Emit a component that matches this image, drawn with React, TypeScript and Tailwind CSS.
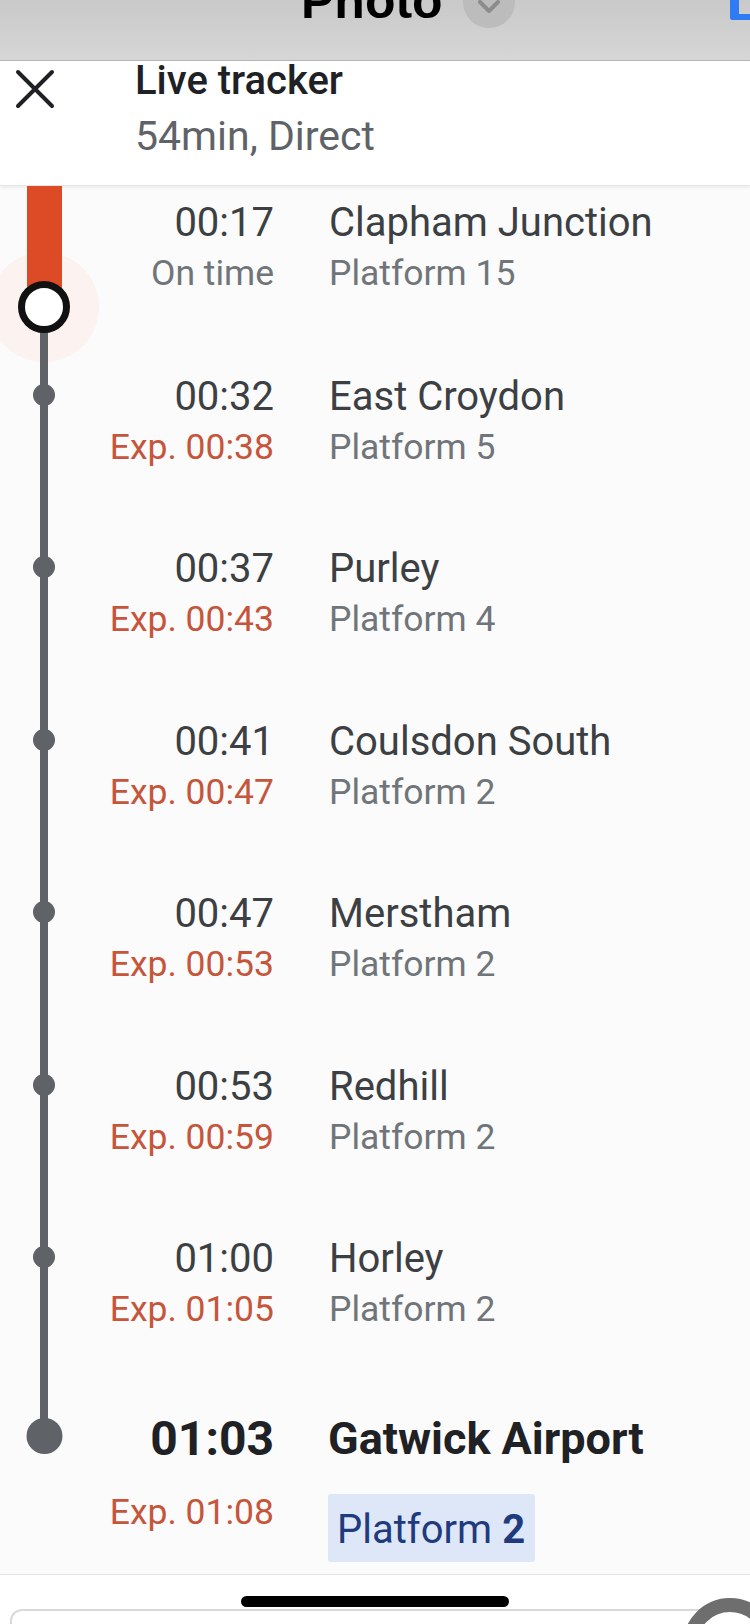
import React from 'react';

type Stop = {
  time: string;
  status: string;
  name: string;
  platform: string;
  late: boolean;
};

const stops: Stop[] = [
  { time: '00:32', status: 'Exp. 00:38', name: 'East Croydon', platform: 'Platform 5', late: true },
  { time: '00:37', status: 'Exp. 00:43', name: 'Purley', platform: 'Platform 4', late: true },
  { time: '00:41', status: 'Exp. 00:47', name: 'Coulsdon South', platform: 'Platform 2', late: true },
  { time: '00:47', status: 'Exp. 00:53', name: 'Merstham', platform: 'Platform 2', late: true },
  { time: '00:53', status: 'Exp. 00:59', name: 'Redhill', platform: 'Platform 2', late: true },
  { time: '01:00', status: 'Exp. 01:05', name: 'Horley', platform: 'Platform 2', late: true },
];

const LINE = '#5f6368';

const StatusBar = () => (
  <div className="h-[61px] border-b border-[#b3b3b3] bg-gradient-to-b from-[#c9c9c9] to-[#d6d6d6] flex items-start overflow-hidden">
    <div className="pl-[301px] -mt-[24px] text-[50px] leading-[50px] font-bold text-black font-['Liberation_Sans',Arial,sans-serif]">
      Photo
    </div>
    <div className="ml-[20px] -mt-[24px] w-[52px] h-[52px] rounded-full bg-[#bcbcbc] flex items-end justify-center pb-[14px]">
      <svg width="24" height="14" viewBox="0 0 24 14">
        <path d="M3 2 L12 11 L21 2" fill="none" stroke="#8c8c8c" strokeWidth="4" strokeLinecap="round" strokeLinejoin="round" />
      </svg>
    </div>
    <div className="ml-auto w-[20px] h-[20px] border-l-[9px] border-b-[6px] border-[#2f7bf5] rounded-bl-[3px]" />
  </div>
);

const Header = () => (
  <div className="h-[125px] bg-white flex border-b border-[#e6e6e6] shadow-[0_2px_3px_rgba(0,0,0,0.06)]">
    <div className="w-[135px] pl-[15px] pt-[8px]">
      <svg width="40" height="40" viewBox="0 0 40 40">
        <path d="M3 3 L37 37 M37 3 L3 37" stroke="#202124" strokeWidth="4" strokeLinecap="round" />
      </svg>
    </div>
    <div className="flex flex-col">
      <div className="text-[40px] leading-[40px] font-medium text-[#202124]">Live tracker</div>
      <div className="mt-[15px] text-[41px] leading-[40px] text-[#5f6368]">54min, Direct</div>
    </div>
  </div>
);

const FirstRow = () => (
  <div className="flex h-[185px]">
    <svg width="100" height="185" className="shrink-0">
      <circle cx="44" cy="121" r="55" fill="#fcf3f0" />
      <rect x="27" y="0" width="35" height="118" fill="#dc4a26" />
      <rect x="40" y="140" width="8" height="45" fill={LINE} />
      <circle cx="44" cy="121" r="22.5" fill="white" stroke="#111" strokeWidth="7" />
    </svg>
    <div className="w-[174px] pt-[12px] text-right">
      <div className="text-[40px] leading-[50px] text-[#3c4043]">00:17</div>
      <div className="text-[35.5px] leading-[50px] text-[#70757a]">On time</div>
    </div>
    <div className="ml-[55px] pt-[12px]">
      <div className="text-[40px] leading-[50px] text-[#3c4043]">Clapham Junction</div>
      <div className="text-[35.5px] leading-[50px] text-[#70757a]">Platform 15</div>
    </div>
  </div>
);

const StopRow = ({ stop }: { stop: Stop }) => (
  <div className="flex h-[172.4px]">
    <svg width="100" height="173" className="shrink-0">
      <rect x="40" y="0" width="8" height="173" fill={LINE} />
      <circle cx="44" cy="24" r="11" fill={LINE} />
    </svg>
    <div className="w-[174px] pt-[1px] text-right">
      <div className="text-[40px] leading-[50px] text-[#3c4043]">{stop.time}</div>
      <div className={`text-[35.5px] leading-[50px] ${stop.late ? 'text-[#c5553b]' : 'text-[#70757a]'}`}>
        {stop.status}
      </div>
    </div>
    <div className="ml-[55px] pt-[1px]">
      <div className="text-[40px] leading-[50px] text-[#3c4043]">{stop.name}</div>
      <div className="text-[35.5px] leading-[50px] text-[#70757a]">{stop.platform}</div>
    </div>
  </div>
);

const LastRow = () => (
  <div className="flex h-[169px]">
    <svg width="100" height="169" className="shrink-0">
      <rect x="40" y="0" width="8" height="30" fill={LINE} />
      <circle cx="44.5" cy="31" r="18" fill={LINE} />
    </svg>
    <div className="w-[174px] text-right pt-[6px]">
      <div className="text-[48px] leading-[56px] font-bold text-[#202124]">01:03</div>
      <div className="mt-[20px] text-[35.5px] leading-[50px] text-[#c5553b]">Exp. 01:08</div>
    </div>
    <div className="ml-[54px] pt-[6px]">
      <div className="text-[45px] leading-[56px] font-bold text-[#202124]">Gatwick Airport</div>
      <div className="mt-[27px] h-[68px] w-[207px] rounded-[3px] bg-[#dde7f8] pl-[9px] pt-[4px] flex items-center text-[40px] text-[#1f3a7d]">
        Platform <span className="ml-[10px] font-bold">2</span>
      </div>
    </div>
  </div>
);

const BottomBar = () => (
  <div className="relative flex-1 bg-white border-t border-[#e2e2e2] overflow-hidden">
    <div className="flex justify-center pt-[21px]">
      <div className="w-[268px] h-[11px] rounded-full bg-black" />
    </div>
    <div className="mt-[2px] ml-[10px] w-[720px] h-[40px] rounded-tl-[12px] border-t-2 border-l-2 border-[#d9d9d9]" />
    <svg width="70" height="60" className="absolute right-0 top-[20px]">
      <circle cx="50" cy="50" r="40" fill="white" stroke="#6e6e6e" strokeWidth="14" />
    </svg>
  </div>
);

export default function App() {
  return (
    <div className="w-[750px] h-[1624px] overflow-hidden flex flex-col bg-[#fbfbfb] font-['Roboto','Noto_Sans',sans-serif]">
      <StatusBar />
      <Header />
      <div className="flex flex-col">
        <FirstRow />
        {stops.map((s) => (
          <StopRow key={s.name} stop={s} />
        ))}
        <LastRow />
      </div>
      <BottomBar />
    </div>
  );
}
